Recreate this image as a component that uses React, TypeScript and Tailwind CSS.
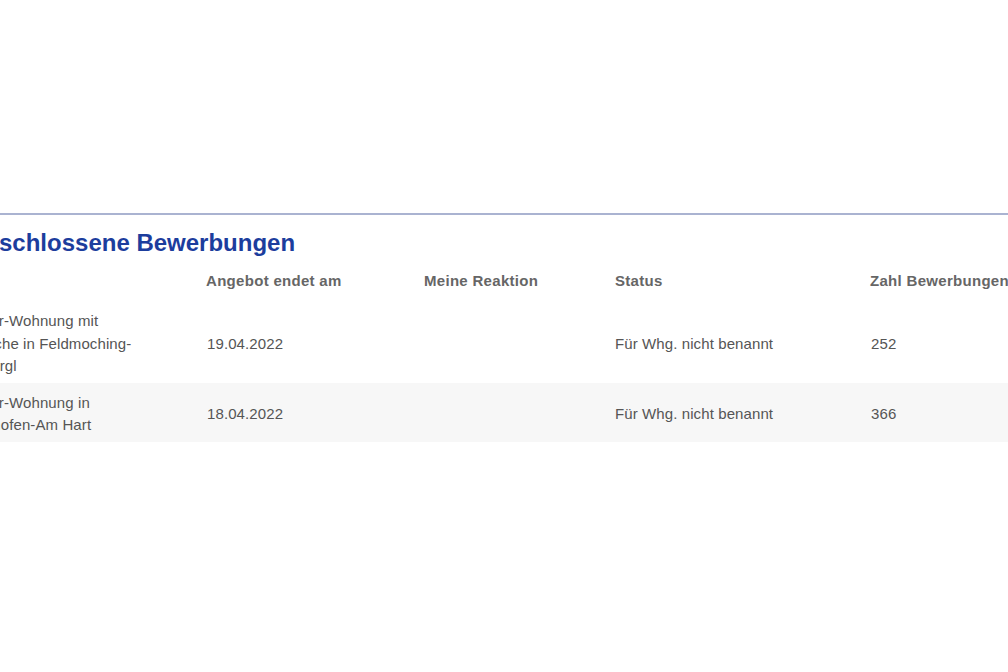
import React from 'react';

interface Bewerbung {
  objekt: string[];
  endetAm: string;
  reaktion: string;
  status: string;
  anzahl: string;
}

const rows: Bewerbung[] = [
  {
    objekt: ['2-Zimmer-Wohnung mit', 'Wohnküche in Feldmoching-', 'Hasenbergl'],
    endetAm: '19.04.2022',
    reaktion: '',
    status: 'Für Whg. nicht benannt',
    anzahl: '252',
  },
  {
    objekt: ['3-Zimmer-Wohnung in', 'Milbertshofen-Am Hart'],
    endetAm: '18.04.2022',
    reaktion: '',
    status: 'Für Whg. nicht benannt',
    anzahl: '366',
  },
];

const cols = 'grid grid-cols-[265px_217px_191px_256px_1fr]';

const App: React.FC = () => {
  return (
    <div
      className="w-full h-[672px] overflow-hidden bg-white"
      style={{ fontFamily: '"Liberation Sans", Arial, sans-serif' }}
    >
      <div className="pt-[213px]">
        <div className="ml-[-60px] w-[1160px] border-t-2 border-[#aab3d1]">
          <h2 className="mt-[14px] ml-[-1px] text-[24px] leading-[28px] font-bold text-[#1c3d9d]">
            Abgeschlossene Bewerbungen
          </h2>

          <div className={`${cols} pt-[13px] pb-[9px] text-[15px] leading-[22px] font-bold tracking-[0.3px] text-[#666]`}>
            <div className="pl-[2px]">Objekt</div>
            <div className="pl-[1px]">Angebot endet am</div>
            <div className="pl-[2px]">Meine Reaktion</div>
            <div className="pl-[2px]">Status</div>
            <div className="pl-[1px]">Zahl Bewerbungen</div>
          </div>

          {rows.map((r, i) => (
            <div
              key={i}
              className={`${cols} items-center pt-[9px] pb-[5px] text-[15px] leading-[22.5px] tracking-[0.1px] text-[#555] ${
                i % 2 === 1 ? 'bg-[#f7f7f7]' : 'bg-white'
              }`}
            >
              <div className="ml-[-1px]">
                {r.objekt.map((line, j) => (
                  <div key={j}>{line}</div>
                ))}
              </div>
              <div className="pl-[2px]">{r.endetAm}</div>
              <div className="pl-[2px]">{r.reaktion}</div>
              <div className="pl-[2px]">{r.status}</div>
              <div className="pl-[2px]">{r.anzahl}</div>
            </div>
          ))}
        </div>
      </div>
    </div>
  );
};

export default App;
